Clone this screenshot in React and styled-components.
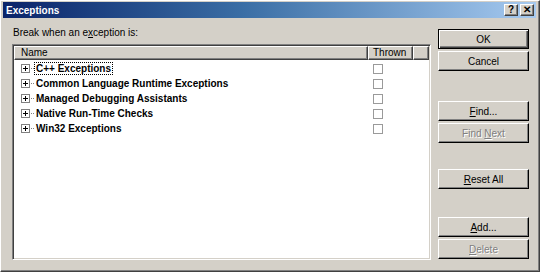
import React from 'react';
import styled, { createGlobalStyle } from 'styled-components';

const GlobalStyle = createGlobalStyle`
  html, body {
    margin: 0;
    padding: 0;
    background: #d4d0c8;
  }
  body {
    font-family: "Liberation Sans", Arial, sans-serif;
    font-size: 10px;
  }
`;

const Window = styled.div`
  box-sizing: border-box;
  width: 540px;
  height: 272px;
  background: #d4d0c8;
  border-top: 1px solid #ffffff;
  border-left: 1px solid #ffffff;
  border-right: 1px solid #404040;
  border-bottom: 1px solid #404040;
  box-shadow: inset -1px -1px 0 #808080, inset 1px 1px 0 #d4d0c8;
  padding: 1px 3px 0 2px;
  display: flex;
  flex-direction: column;
`;

const TitleBar = styled.div`
  height: 16px;
  display: flex;
  align-items: center;
  padding: 0 2px 0 3px;
  background: linear-gradient(to right, #0a246a 0%, #3a6ea5 45%, #a6caf0 100%);
`;

const Title = styled.div`
  flex: 1;
  color: #ffffff;
  font-weight: bold;
  font-size: 10px;
`;

const CaptionButton = styled.div`
  box-sizing: border-box;
  width: 14px;
  height: 12px;
  margin-left: ${p => p.gap || 0}px;
  background: #d4d0c8;
  border-top: 1px solid #ffffff;
  border-left: 1px solid #ffffff;
  border-right: 1px solid #404040;
  border-bottom: 1px solid #404040;
  box-shadow: inset -1px -1px 0 #808080;
  display: flex;
  align-items: center;
  justify-content: center;
  font-weight: bold;
  font-size: 10px;
  line-height: 1;
  color: #000000;
`;

const Body = styled.div`
  flex: 1;
  display: flex;
  padding: 9px 0 0 9px;
`;

const LeftPane = styled.div`
  width: 419px;
  display: flex;
  flex-direction: column;
`;

const Label = styled.div`
  height: 17px;
  padding-left: 1px;
  color: #000000;
  line-height: 11px;
`;

const ListBox = styled.div`
  box-sizing: border-box;
  height: 216px;
  background: #ffffff;
  border-top: 1px solid #808080;
  border-left: 1px solid #808080;
  border-right: 1px solid #ffffff;
  border-bottom: 1px solid #ffffff;
  box-shadow: inset 1px 1px 0 #404040, inset -1px -1px 0 #d4d0c8;
  padding: 1px;
  display: flex;
  flex-direction: column;
`;

const Header = styled.div`
  display: flex;
  height: 14px;
  margin-bottom: 1px;
`;

const HeaderCell = styled.div`
  box-sizing: border-box;
  width: ${p => p.w ? `${p.w}px` : 'auto'};
  flex: ${p => p.w ? 'none' : 1};
  background: #d4d0c8;
  border-top: 1px solid #ffffff;
  border-left: 1px solid #ffffff;
  border-right: 1px solid #404040;
  border-bottom: 1px solid #404040;
  box-shadow: inset -1px -1px 0 #808080;
  padding-left: ${p => p.pad}px;
  line-height: 12px;
  color: #000000;
`;

const Row = styled.div`
  display: flex;
  align-items: center;
  height: 15px;
`;

const NameCell = styled.div`
  box-sizing: border-box;
  width: 354px;
  display: flex;
  align-items: center;
  padding-left: 7px;
`;

const Expander = styled.svg`
  flex: none;
  display: block;
`;

const ItemText = styled.span`
  font-weight: bold;
  font-size: 10px;
  color: #000000;
  padding: 1px 2px;
  line-height: 11px;
  outline: ${p => p.focused ? '1px dotted #000000' : 'none'};
  outline-offset: -1px;
`;

const CheckCell = styled.div`
  width: 45px;
  padding-left: 5px;
  display: flex;
  align-items: center;
`;

const CheckBox = styled.div`
  box-sizing: border-box;
  width: 10px;
  height: 10px;
  border: 1px solid #9a9a9a;
  background: #ffffff;
`;

const RightPane = styled.div`
  display: flex;
  flex-direction: column;
  padding: 2px 0 0 7px;
`;

const Button = styled.div`
  box-sizing: border-box;
  width: 91px;
  height: 20px;
  margin-top: ${p => p.top || 0}px;
  background: #d4d0c8;
  display: flex;
  align-items: center;
  justify-content: center;
  color: ${p => p.disabled ? '#808080' : '#000000'};
  text-shadow: ${p => p.disabled ? '1px 1px 0 #ffffff' : 'none'};
  border-top: 1px solid ${p => p.primary ? '#000000' : '#ffffff'};
  border-left: 1px solid ${p => p.primary ? '#000000' : '#ffffff'};
  border-right: 1px solid #000000;
  border-bottom: 1px solid #000000;
  box-shadow: ${p => p.primary
    ? 'inset 1px 1px 0 #ffffff, inset -1px -1px 0 #404040, inset -2px -2px 0 #808080'
    : 'inset -1px -1px 0 #808080'};
  font-size: 10px;
`;

const Key = styled.span`
  text-decoration: underline;
`;

const items = [
  'C++ Exceptions',
  'Common Language Runtime Exceptions',
  'Managed Debugging Assistants',
  'Native Run-Time Checks',
  'Win32 Exceptions',
];

function PlusBox() {
  return (
    <Expander width="13" height="9" viewBox="0 0 13 9">
      <rect x="0.5" y="0.5" width="8" height="8" fill="#ffffff" stroke="#808080" />
      <path d="M2 4.5h5M4.5 2v5" stroke="#000000" strokeWidth="1" />
      <path d="M10 4.5h1M12 4.5h1" stroke="#808080" strokeWidth="1" />
    </Expander>
  );
}

export default function App() {
  return (
    <>
      <GlobalStyle />
      <Window>
        <TitleBar>
          <Title>Exceptions</Title>
          <CaptionButton>?</CaptionButton>
          <CaptionButton gap={2}>✕</CaptionButton>
        </TitleBar>
        <Body>
          <LeftPane>
            <Label>Break when an e<Key>x</Key>ception is:</Label>
            <ListBox>
              <Header>
                <HeaderCell w={354} pad={6}>Name</HeaderCell>
                <HeaderCell w={45} pad={4}>Thrown</HeaderCell>
                <HeaderCell />
              </Header>
              {items.map((name, i) => (
                <Row key={name}>
                  <NameCell>
                    <PlusBox />
                    <ItemText focused={i === 0}>{name}</ItemText>
                  </NameCell>
                  <CheckCell>
                    <CheckBox />
                  </CheckCell>
                </Row>
              ))}
            </ListBox>
          </LeftPane>
          <RightPane>
            <Button primary>OK</Button>
            <Button top={2}>Cancel</Button>
            <Button top={30}><span><Key>F</Key>ind...</span></Button>
            <Button top={2} disabled><span>Find <Key>N</Key>ext</span></Button>
            <Button top={26}><span><Key>R</Key>eset All</span></Button>
            <Button top={28}><span><Key>A</Key>dd...</span></Button>
            <Button top={2} disabled><span><Key>D</Key>elete</span></Button>
          </RightPane>
        </Body>
      </Window>
    </>
  );
}
